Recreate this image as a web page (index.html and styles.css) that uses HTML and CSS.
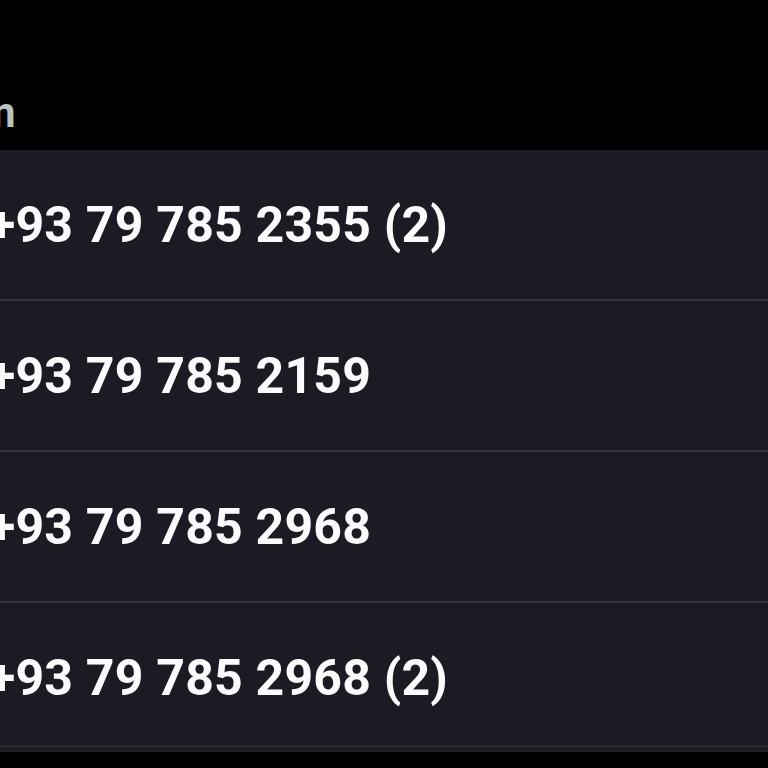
FILE: index.html
```html
<!DOCTYPE html>
<html>
<head>
<meta charset="utf-8">
<link rel="stylesheet" href="styles.css">
</head>
<body>
<div class="screen">
  <div class="header"><span class="title">n</span></div>
  <div class="list">
    <div class="row"><span class="num">+93 79 785 2355 (2)</span></div>
    <div class="row"><span class="num">+93 79 785 2159</span></div>
    <div class="row"><span class="num">+93 79 785 2968</span></div>
    <div class="row"><span class="num">+93 79 785 2968 (2)</span></div>
  </div>
  <div class="footer"></div>
</div>
</body>
</html>
```
FILE: styles.css
```css
html, body {
  margin: 0;
  padding: 0;
  background: #000;
  overflow: hidden;
}
.screen {
  width: 768px;
  height: 768px;
  display: flex;
  flex-direction: column;
  font-family: Roboto, "Noto Sans", sans-serif;
}
.header {
  height: 150px;
  flex: none;
  display: flex;
  align-items: flex-end;
  box-sizing: border-box;
  padding-bottom: 16px;
}
.title {
  font-size: 42px;
  font-weight: 700;
  color: #b6c5bd;
  margin-left: -8px;
  line-height: 1;
}
.list {
  background: #1b1b23;
  height: 595px;
  flex: none;
  overflow: hidden;
  display: flex;
  flex-direction: column;
}
.row {
  height: 149px;
  flex: none;
  border-bottom: 2px solid #35353e;
  display: flex;
  align-items: center;
}
.num {
  font-size: 50px;
  font-weight: 700;
  color: #fbfbfd;
  margin-left: -12px;
  letter-spacing: 0.2px;
  white-space: nowrap;
}
.footer {
  height: 7px;
  flex: none;
  box-sizing: border-box;
  border-top: 2px solid #2b2b34;
  background: #1f1f27;
}
```
